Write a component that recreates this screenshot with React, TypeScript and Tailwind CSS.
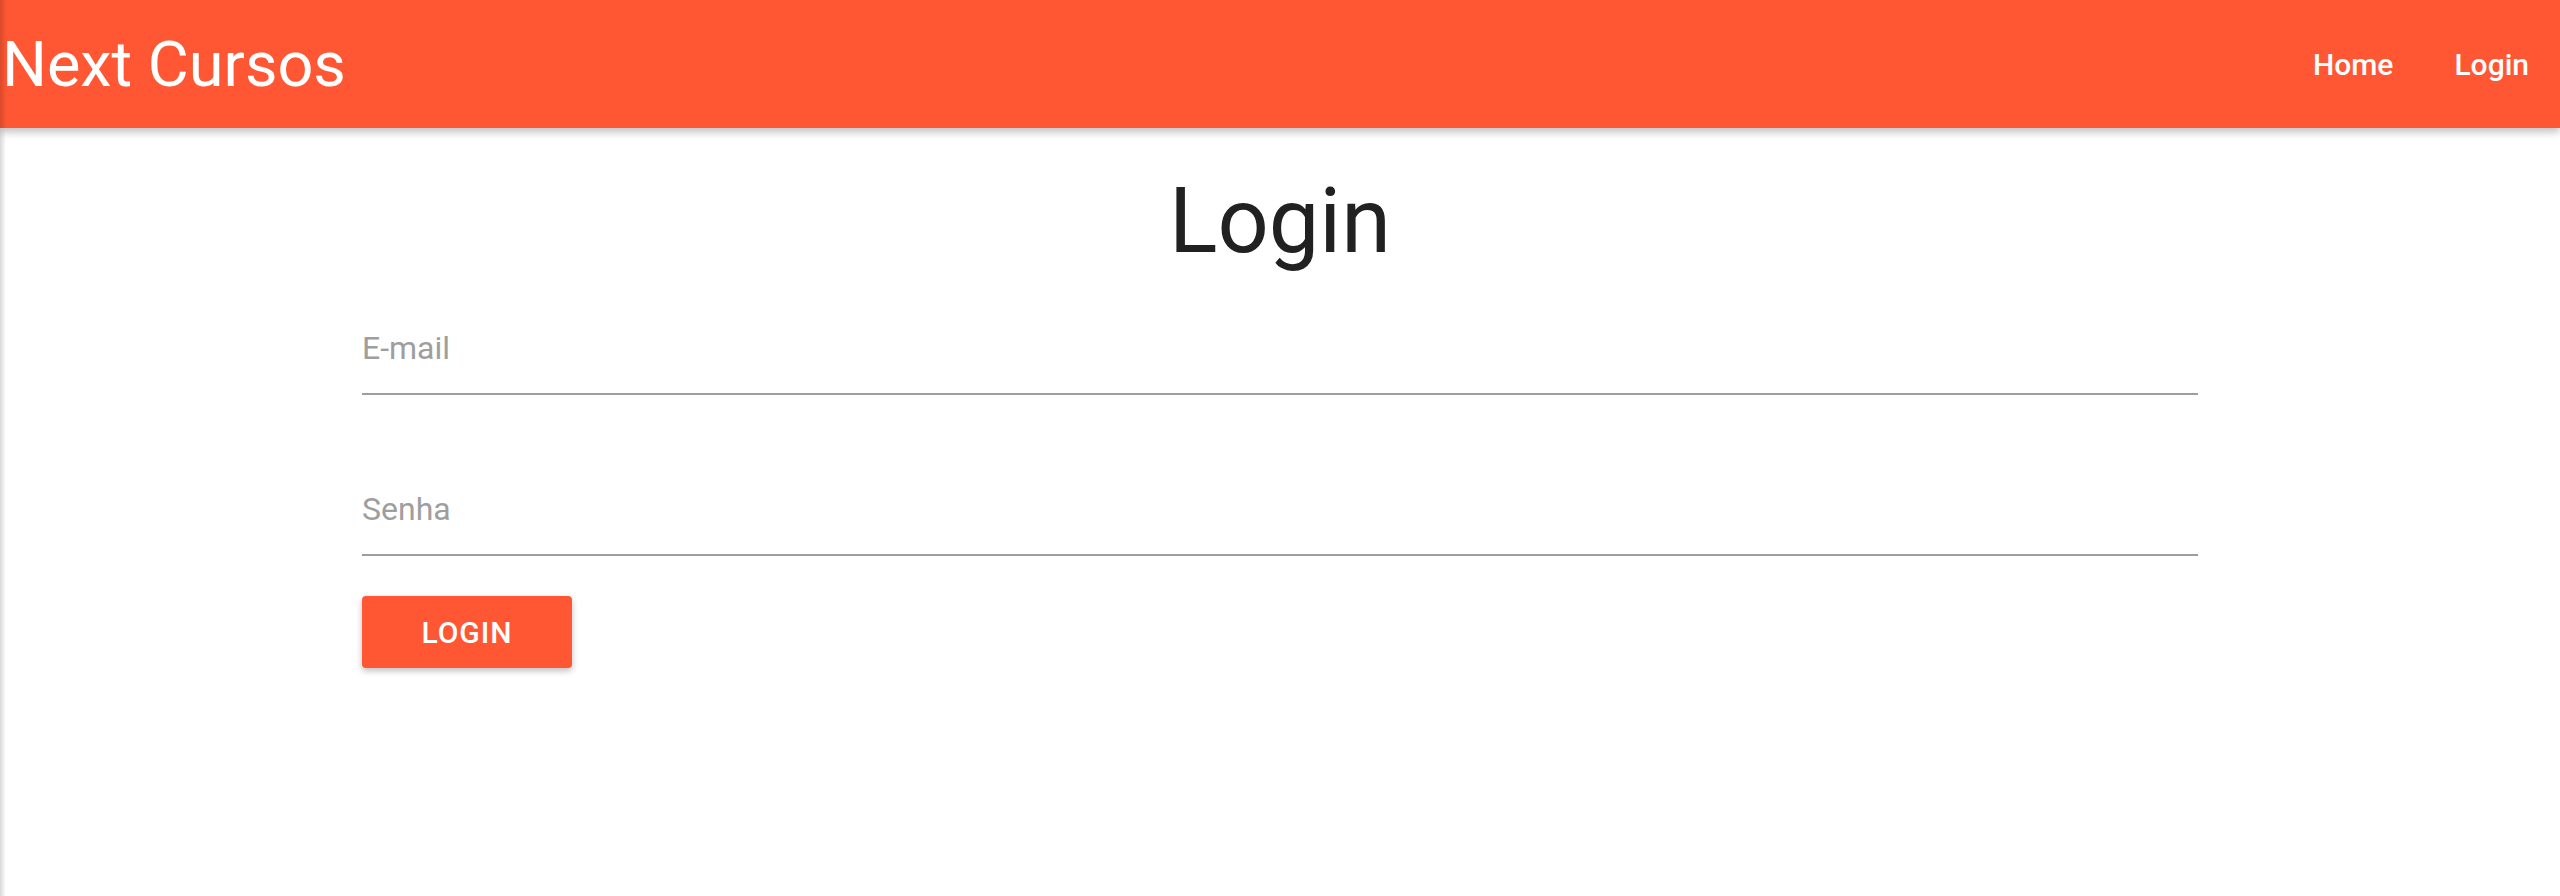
import { useState } from "react";

export default function App() {
  const [email, setEmail] = useState("");
  const [senha, setSenha] = useState("");

  return (
    <div className="relative min-h-screen bg-white font-['Roboto',sans-serif]">
      {/* drawer edge shadow, off canvas */}
      <div className="pointer-events-none fixed left-0 top-0 z-20 h-full w-[6px] bg-gradient-to-r from-black/15 to-transparent" />

      <header className="relative z-10 flex h-[128px] items-center justify-between bg-[#ff5733] pr-[31px] text-white shadow-[0_4px_8px_rgba(0,0,0,0.25)]">
        <h1 className="pl-[2px] text-[63px] font-normal leading-none">Next Cursos</h1>
        <nav className="flex items-center gap-[61px] text-[30px] font-medium">
          <a href="#">Home</a>
          <a href="#">Login</a>
        </nav>
      </header>

      <main className="mx-auto w-[1836px] pt-[34px]">
        <h2 className="text-center text-[90px] font-normal leading-[120px] text-[#212121]">Login</h2>

        <form onSubmit={(e) => e.preventDefault()} className="mt-[42px]">
          <label className="block border-b-2 border-[#9e9e9e] pt-[6px] pb-[27px]">
            <input
              type="email"
              placeholder="E-mail"
              className="w-full bg-transparent text-[32px] leading-[36px] text-[#212121] placeholder:text-[#9e9e9e] focus:outline-none"
              value={email}
              onChange={(e) => setEmail(e.target.value)}
            />
          </label>

          <label className="mt-[96px] block border-b-2 border-[#9e9e9e] pb-[27px]">
            <input
              type="password"
              placeholder="Senha"
              className="w-full bg-transparent text-[32px] leading-[36px] text-[#212121] placeholder:text-[#9e9e9e] focus:outline-none"
              value={senha}
              onChange={(e) => setSenha(e.target.value)}
            />
          </label>

          <button
            type="submit"
            className="mt-[40px] h-[72px] w-[210px] rounded-[4px] bg-[#ff5733] text-[30px] font-medium tracking-[1px] text-white shadow-[0_3px_6px_rgba(0,0,0,0.25)]">
            LOGIN
          </button>
        </form>
      </main>
    </div>
  );
}
